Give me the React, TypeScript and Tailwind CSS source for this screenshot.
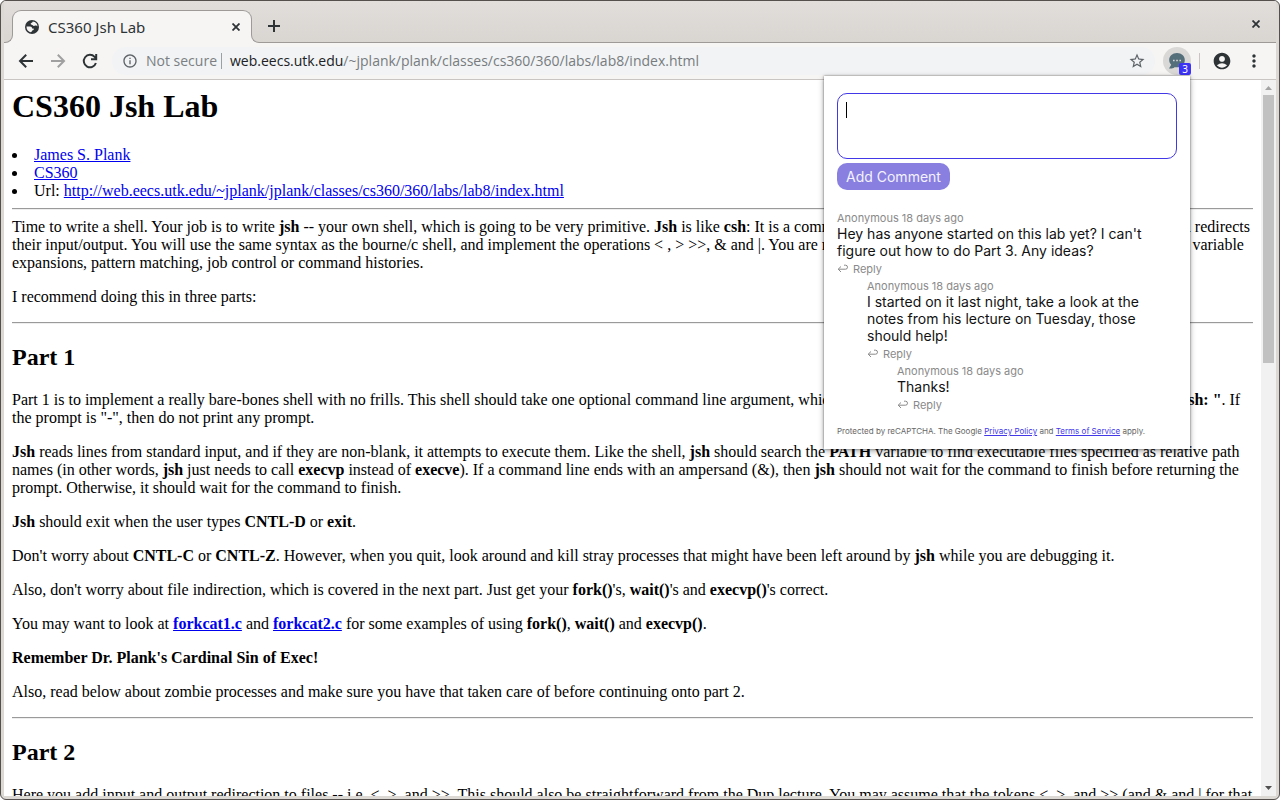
import type { ReactNode } from "react";
import { MdInfoOutline, MdStarBorder, MdAccountCircle, MdMoreVert } from "react-icons/md";

function GlobeIcon() {
  return (
    <svg viewBox="0 0 14 14" className="size-[14px] shrink-0" aria-hidden="true">
      <circle cx="7" cy="7" r="7" fill="#2e3436" />
      <path d="M7.800 1.400C7.800 2.600 5.800 2.600 5.600 3.800 5.500 4.800 7.600 4.600 8 5.600 8.200 6.300 9.600 6 10.400 5.600 11.200 5.200 12 5.700 12.500 6.400 12.500 3.700 10.500 1.600 7.800 1.400z" fill="#f6f5f4" />
      <path d="M1.500 6.600H5C6.400 6.600 7 7.400 7 8.400H8.600C9.200 9.600 8.200 10.300 7.200 10.400 7 11.400 6.400 12 5.200 12.200 3 11.500 1.400 9.600 1.500 6.600z" fill="#f6f5f4" />
    </svg>
  );
}

function CrossIcon() {
  return (
    <svg viewBox="0 0 8 8" className="size-2" fill="none" stroke="currentColor" strokeWidth="1.800" aria-hidden="true">
      <path d="M.5.5l7 7M7.500.5l-7 7" />
    </svg>
  );
}

function PlusIcon() {
  return (
    <svg viewBox="0 0 12 12" className="size-3" fill="none" stroke="currentColor" strokeWidth="2" aria-hidden="true">
      <path d="M6 0v12M0 6h12" />
    </svg>
  );
}

function ToolbarIcon({ d }: { d: string }) {
  return (
    <svg viewBox="0 0 20 20" className="size-5" fill="none" stroke="currentColor" strokeWidth="2" aria-hidden="true">
      <path d={d} />
    </svg>
  );
}

function TabStrip() {
  return (
    <header className="flex h-[42px] shrink-0 items-end bg-linear-to-b from-[#e1dedb] to-[#d9d5d1] text-[#2e3436]">
      <div className="z-10 -mr-px h-[9px] w-[9px] shrink-0 bg-[#f6f5f4]">
        <div className="h-full w-full rounded-br-lg border-r border-b border-[#9d9a98] bg-[#dad6d2]" />
      </div>
      <div className="flex h-[33px] w-60 items-center rounded-t-[9px] border border-b-0 border-[#9d9a98] bg-[#f6f5f4] pr-[7px] pl-3">
        <GlobeIcon />
        <span className="ml-[9px] flex-1 truncate text-[15px] leading-5">CS360 Jsh Lab</span>
        <button aria-label="Close tab" className="flex size-4 items-center justify-center">
          <CrossIcon />
        </button>
      </div>
      <div className="z-10 -ml-px h-[9px] w-[9px] shrink-0 bg-[#f6f5f4]">
        <div className="h-full w-full rounded-bl-lg border-b border-l border-[#9d9a98] bg-[#dad6d2]" />
      </div>
      <div className="flex h-full flex-1 items-center justify-between border-b border-[#9d9a98] pr-3 pl-1">
        <button aria-label="New tab" className="mt-2 flex size-5 items-center justify-center">
          <PlusIcon />
        </button>
        <button aria-label="Close window" className="mt-1 flex size-4 items-center justify-center">
          <CrossIcon />
        </button>
      </div>
    </header>
  );
}

function ChatIcon() {
  return (
    <svg viewBox="0 0 18 18" className="size-[18px]" aria-hidden="true">
      <path d="M9 1C4.500 1 1.200 4 1.200 8c0 2 .8 3.600 2 4.800L1 16.500c2 .3 4 0 5.500-1.300h5L17 16.500l-2-3.600c1.100-1.200 1.800-2.900 1.800-4.900C16.800 4 13.500 1 9 1z" fill="#546e7a" />
      <path d="M5 8.500h1.600M8.200 8.500h1.600M11.400 8.500H13" stroke="#d8d8d6" strokeWidth="1.400" />
    </svg>
  );
}

function Toolbar() {
  return (
    <nav className="flex h-[37px] shrink-0 items-center border-b border-[#c8c5c2] bg-[#f6f5f4] pr-3 pl-3 text-[#2e3436]">
      <button aria-label="Back"><ToolbarIcon d="M17 10H4.500M10.200 3.800L4 10l6.200 6.200" /></button>
      <button aria-label="Forward" className="ml-3 text-[#a0a0a0]"><ToolbarIcon d="M3 10h12.500M9.800 3.800L16 10l-6.200 6.200" /></button>
      <button aria-label="Reload" className="ml-3"><ToolbarIcon d="M15.900 12A6.200 6.200 0 1 1 14.600 5.900L16 7.400M16.200 3v5.200H11" /></button>
      <div className="ml-3 flex h-7 flex-1 items-center rounded-full bg-[#f1f3f4] pr-[9px] pl-[10px] font-['Open_Sans',sans-serif] text-[14px] leading-5">
        <MdInfoOutline className="size-4 text-[#5f6368]" />
        <span className="ml-2 text-[#7b7f83]">Not secure</span>
        <span className="mr-1 ml-1 h-4 w-px bg-[#9aa0a6]" />
        <span className="ml-1 flex-1 text-[#777b7f]"><span className="text-[#202124]">web.eecs.utk.edu</span>/~jplank/plank/classes/cs360/360/labs/lab8/index.html</span>
        <button aria-label="Bookmark this page"><MdStarBorder className="size-[18px] text-[#5f6368]" /></button>
      </div>
      <button aria-label="Comments, 3 new" className="relative ml-2 flex size-7 items-center justify-center rounded-full bg-[#d9d8d6]">
        <ChatIcon />
        <span className="absolute top-4 left-4 flex h-3 w-3 items-center justify-center rounded-xs bg-[#3d33f5] text-[10px] leading-3 text-white">3</span>
      </button>
      <span className="ml-2 h-4 w-px bg-[#c8c5c2]" />
      <button aria-label="Profile" className="ml-3"><MdAccountCircle className="size-5" /></button>
      <button aria-label="Menu" className="ml-3"><MdMoreVert className="size-5" /></button>
    </nav>
  );
}

function Link({ children }: { children: ReactNode }) {
  return <a href="#" className="text-[#0000ee] underline">{children}</a>;
}

function Rule() {
  return <hr className="h-[2px] border-t border-b border-t-[#9a9a9a] border-b-[#eeeeee]" />;
}

function Bullet({ children }: { children: ReactNode }) {
  return (
    <li className="flex items-center">
      <span className="mr-[17px] size-[5px] rounded-full bg-black" />
      <span>{children}</span>
    </li>
  );
}

function Article() {
  return (
    <main className="min-w-0 flex-1 overflow-hidden bg-white px-2 pt-2 font-['Liberation_Serif',serif] text-[16px] leading-[18px] text-black">
      <h1 className="text-[32px] leading-[37px] font-bold">CS360 Jsh Lab</h1>
      <ul className="mt-[21px] mb-2">
        <Bullet><Link>James S. Plank</Link></Bullet>
        <Bullet><Link>CS360</Link></Bullet>
        <Bullet>Url: <Link>http://web.eecs.utk.edu/~jplank/jplank/classes/cs360/360/labs/lab8/index.html</Link></Bullet>
      </ul>
      <Rule />
      <p className="mt-2">Time to write a shell. Your job is to write <b>jsh</b> -- your own shell, which is going to be very primitive. <b>Jsh</b> is like <b>csh</b>: It is a command-line interpreter that gets commands, runs them, and redirects their input/output. You will use the same syntax as the bourne/c shell, and implement the operations &lt; , &gt; &gt;&gt;, &amp; and |. You are not required to implement anything more special, such as variable expansions, pattern matching, job control or command histories.</p>
      <p className="my-4">I recommend doing this in three parts:</p>
      <Rule />
      <h2 className="my-5 text-[24px] leading-[27px] font-bold">Part 1</h2>
      <p className="mb-4">Part 1 is to implement a really bare-bones shell with no frills. This shell should take one optional command line argument, which is the prompt. If there is no argument, the default is <b>"jsh: "</b>. If the prompt is "-", then do not print any prompt.</p>
      <p className="mb-4"><b>Jsh</b> reads lines from standard input, and if they are non-blank, it attempts to execute them. Like the shell, <b>jsh</b> should search the <b>PATH</b> variable to find executable files specified as relative path names (in other words, <b>jsh</b> just needs to call <b>execvp</b> instead of <b>execve</b>). If a command line ends with an ampersand (&amp;), then <b>jsh</b> should not wait for the command to finish before returning the prompt. Otherwise, it should wait for the command to finish.</p>
      <p className="mb-4"><b>Jsh</b> should exit when the user types <b>CNTL-D</b> or <b>exit</b>.</p>
      <p className="mb-4">Don't worry about <b>CNTL-C</b> or <b>CNTL-Z</b>. However, when you quit, look around and kill stray processes that might have been left around by <b>jsh</b> while you are debugging it.</p>
      <p className="mb-4">Also, don't worry about file indirection, which is covered in the next part. Just get your <b>fork()</b>'s, <b>wait()</b>'s and <b>execvp()</b>'s correct.</p>
      <p className="mb-4">You may want to look at <b><Link>forkcat1.c</Link></b> and <b><Link>forkcat2.c</Link></b> for some examples of using <b>fork()</b>, <b>wait()</b> and <b>execvp()</b>.</p>
      <p className="mb-4"><b>Remember Dr. Plank's Cardinal Sin of Exec!</b></p>
      <p className="mb-4">Also, read below about zombie processes and make sure you have that taken care of before continuing onto part 2.</p>
      <Rule />
      <h2 className="my-5 text-[24px] leading-[27px] font-bold">Part 2</h2>
      <p>Here you add input and output redirection to files -- i.e. &lt;, &gt;, and &gt;&gt;. This should also be straightforward from the Dup lecture. You may assume that the tokens &lt;, &gt;, and &gt;&gt; (and &amp; and | for that matter) are separated from their arguments by whitespace.</p>
    </main>
  );
}

function Scrollbar() {
  return (
    <div className="flex w-[15px] shrink-0 flex-col items-center bg-[#f1f1f1]" aria-hidden="true">
      <svg viewBox="0 0 15 15" className="size-[15px]"><path d="M4 10l3.500-4L11 10z" fill="#a3a3a3" /></svg>
      <div className="flex w-full flex-1 flex-col px-[2px]">
        <div className="h-[39%] bg-[#c1c1c1]" />
      </div>
      <svg viewBox="0 0 15 15" className="size-[15px]"><path d="M4 5l3.500 4L11 5z" fill="#505050" /></svg>
    </div>
  );
}

function Comment({ text, children }: { text: string; children?: ReactNode }) {
  return (
    <article>
      <p className="text-[11px] leading-[14px] text-[#8a8a8a]">Anonymous 18 days ago</p>
      <p className="text-[14px] leading-[17px] text-[#111111]">{text}</p>
      <button className="flex h-5 items-center gap-1 text-[11px] leading-[14px] text-[#8a8a8a]">
        <svg viewBox="0 0 12 10" className="h-[10px] w-3" fill="none" stroke="currentColor" aria-hidden="true">
          <path d="M4 2.500L1.200 5.200 4 8M1.200 5.200h7.300a2 2 0 0 0 0-4H7" />
        </svg>
        Reply
      </button>
      {children && <div className="pl-[30px]">{children}</div>}
    </article>
  );
}

function CommentsPopup() {
  return (
    <aside className="absolute top-[76px] right-[90px] z-20 w-[366px] bg-white px-[13px] pt-[17px] pb-3 font-[Inter,sans-serif] shadow-[0_0_2px_rgba(0,0,0,0.5),0_2px_6px_rgba(0,0,0,0.35)]">
      <div className="relative">
        <textarea aria-label="Comment" className="block h-[66px] w-full resize-none rounded-[10px] border border-[#4338e8] bg-white px-2 py-2 text-[14px] leading-[17px] outline-none" />
        <span className="absolute top-[9px] left-[9px] h-4 w-px bg-black" />
      </div>
      <button className="mt-1 block h-[27px] rounded-[10px] bg-[#887fe0] px-[9px] text-[14px] leading-[27px] text-[#f4f2ff]">Add Comment</button>
      <section className="mt-[21px] pr-4">
        <Comment text="Hey has anyone started on this lab yet? I can't figure out how to do Part 3. Any ideas?">
          <Comment text="I started on it last night, take a look at the notes from his lecture on Tuesday, those should help!">
            <Comment text="Thanks!" />
          </Comment>
        </Comment>
      </section>
      <p className="mt-[10px] text-[8px] leading-[12px] text-[#666666]">
        Protected by reCAPTCHA. The Google <a href="#" className="text-[#4338e8] underline">Privacy Policy</a> and <a href="#" className="text-[#4338e8] underline">Terms of Service</a> apply.
      </p>
    </aside>
  );
}

export default function App() {
  return (
    <div className="relative h-screen overflow-hidden bg-white font-['Noto_Sans',sans-serif]">
      <div className="flex h-full flex-col overflow-hidden rounded-md border border-[#55504e] bg-[#dcd8d4] px-[3px] pb-[3px]">
        <TabStrip />
        <Toolbar />
        <div className="flex min-h-0 flex-1">
          <Article />
          <Scrollbar />
        </div>
      </div>
      <CommentsPopup />
    </div>
  );
}
